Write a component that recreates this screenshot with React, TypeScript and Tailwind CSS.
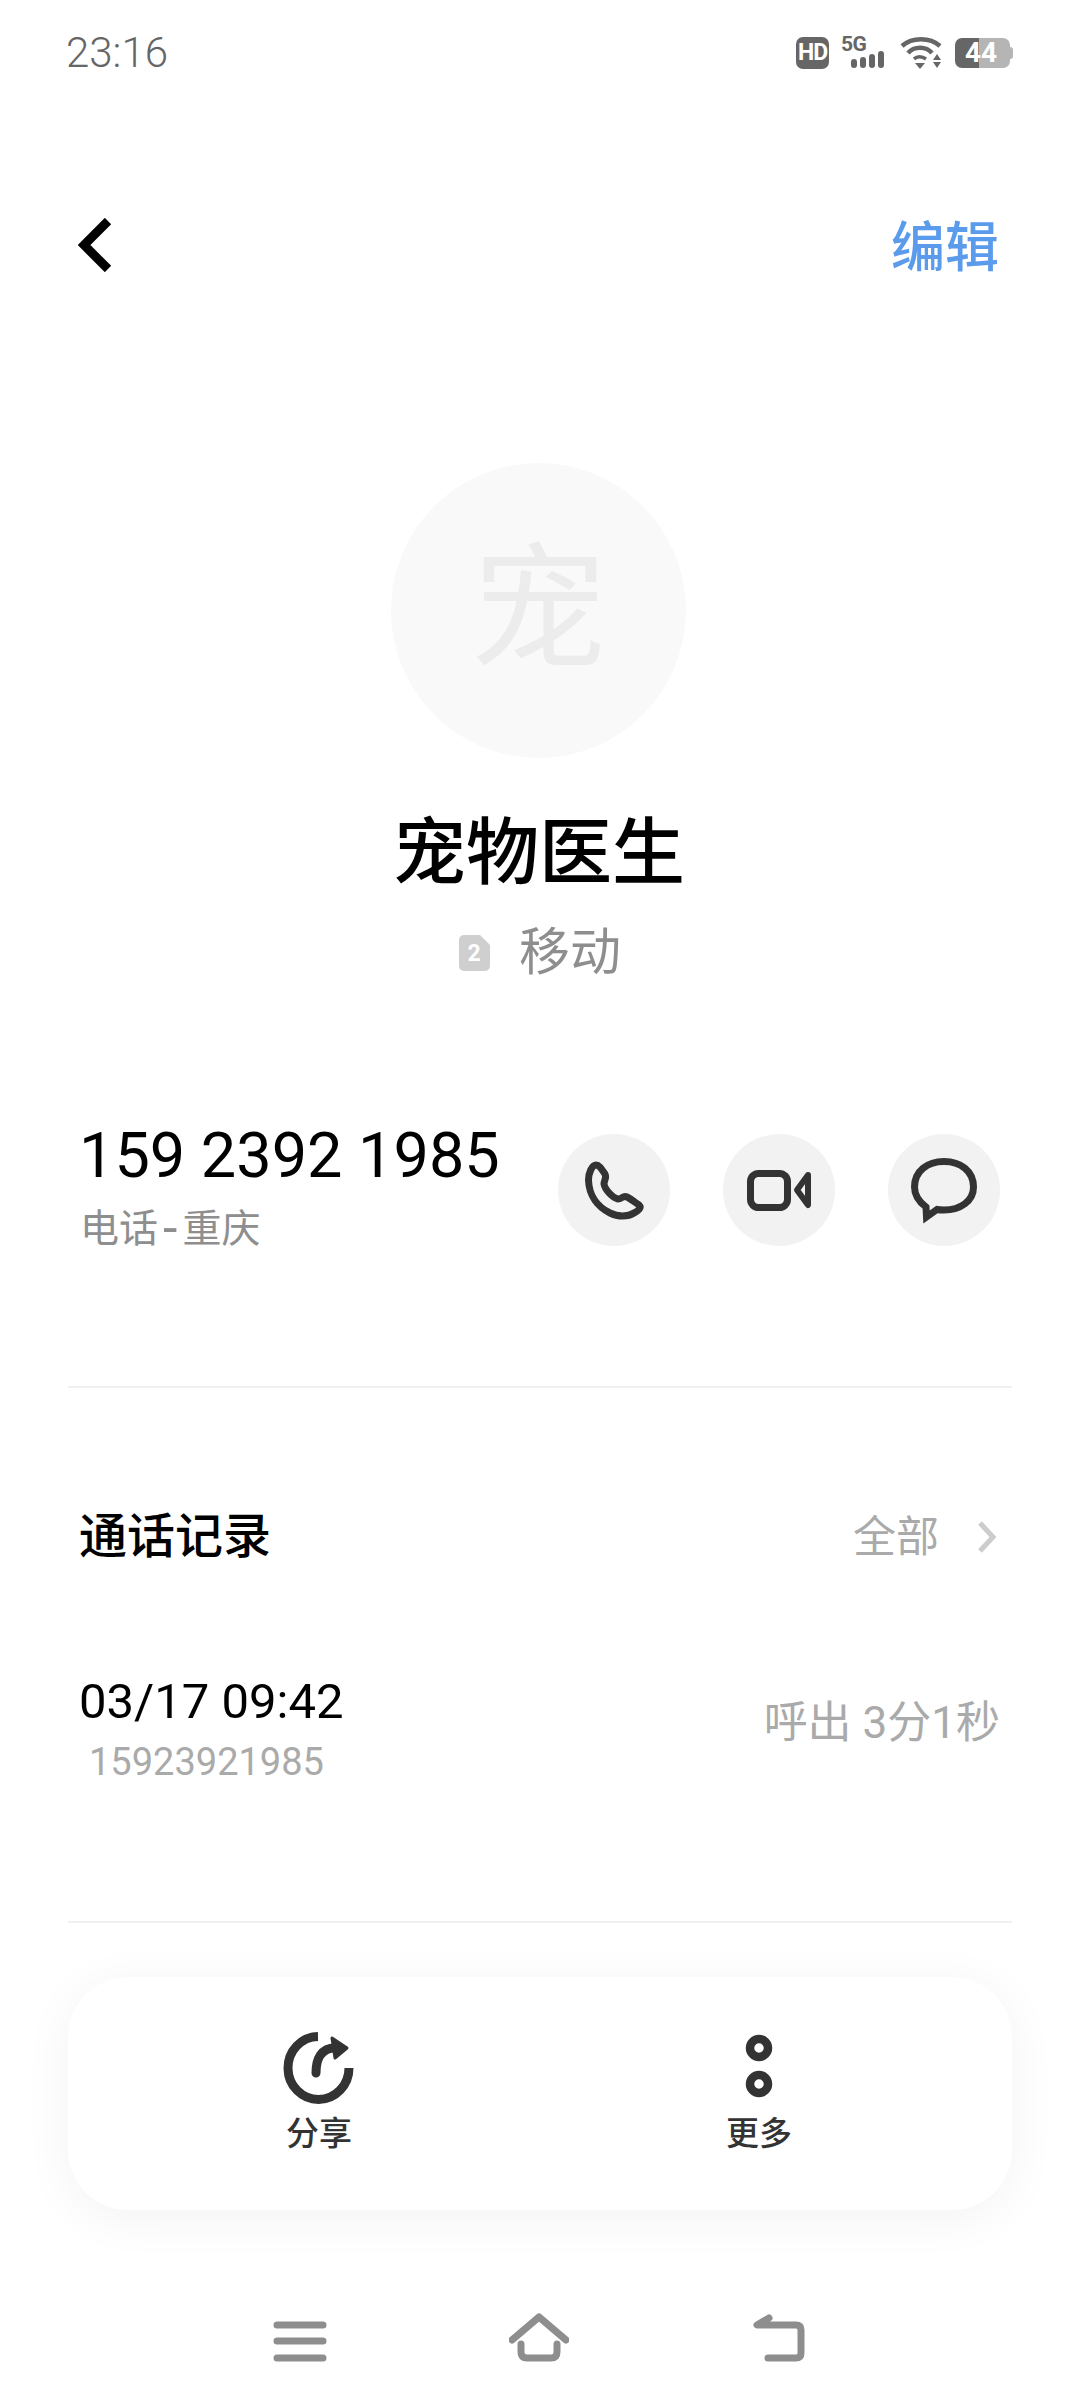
const sans = "font-['Roboto','Noto_Sans_CJK_SC',sans-serif]";

function StatusIcons() {
    return (
        <div className="flex items-center">
            <div className="flex h-[32px] w-[33px] items-center justify-center rounded-[7px] bg-[#666666] font-['Roboto'] text-[23px] font-bold tracking-[-1px] text-white">
                HD
            </div>
            <div className="relative ml-[12px] h-[32px] w-[44px]">
                <span className="absolute left-0 top-[-4px] font-['Roboto'] text-[21px] font-bold leading-[22px] tracking-[-0.5px] text-[#666666]">
                    5G
                </span>
                <svg className="absolute left-0 top-0" width="44" height="32" viewBox="0 0 44 32" fill="#666666">
                    <rect x="10" y="22" width="6" height="9" rx="3" />
                    <rect x="19" y="20" width="6" height="11" rx="3" />
                    <rect x="28" y="17" width="6" height="14" rx="3" />
                    <rect x="37" y="14" width="6" height="17" rx="3" />
                </svg>
            </div>
            <svg className="ml-[15px]" width="42" height="32" viewBox="0 0 42 32" fill="none" stroke="#666666" strokeWidth="4.5">
                <path d="M2 9 C12 0 30 0 40 9" />
                <path d="M8 16 C14 9 26 9 32 16" />
                <path d="M14 22 C17 19 22 19 26 22" strokeWidth="3.5" />
                <path d="M15 26 H25 L20 32 Z" fill="#666666" stroke="none" />
                <path d="M37 17 L41 23 H33 Z M33 25 H41 L37 31 Z" fill="#666666" stroke="none" />
            </svg>
            <div className="relative ml-[13px] h-[30px] w-[58px]">
                <div className="absolute right-0 top-[9px] h-[12px] w-[4px] rounded-r-[3px] bg-[#b5b5b5]" />
                <div className="flex h-[30px] w-[55px] overflow-hidden rounded-[7px]">
                    <div className="h-full w-[24px] bg-[#666666]" />
                    <div className="h-full flex-1 bg-[#b5b5b5]" />
                </div>
                <span className="absolute left-[10px] top-0 font-['Roboto'] text-[28px] font-bold leading-[30px] text-white">44</span>
            </div>
        </div>
    );
}

function RoundAction({ children }: { children: React.ReactNode }) {
    return (
        <div className="flex h-[112px] w-[112px] items-center justify-center rounded-full bg-[#f2f2f2]">
            {children}
        </div>
    );
}

export default function App() {
    return (
        <div className={`flex h-[2404px] w-[1080px] flex-col overflow-hidden bg-white ${sans}`}>
            {/* status bar */}
            <div className="flex h-[106px] shrink-0 items-center justify-between pl-[66px] pr-[67px]">
                <span className="text-[42px] font-light leading-[48px] text-[#666666]">23:16</span>
                <StatusIcons />
            </div>

            {/* header */}
            <div className="mt-[84px] flex h-[110px] shrink-0 items-center justify-between pl-[78px] pr-[81px]">
                <svg width="34" height="54" viewBox="0 0 34 54" fill="none">
                    <path d="M30 3 L6 27 L30 51" stroke="#000000" strokeWidth="9" strokeLinejoin="miter" />
                </svg>
                <span className="mt-[8px] text-[54px] font-medium leading-[64px] text-[#5b9bec]">编辑</span>
            </div>

            {/* contact */}
            <div className="mr-[3px] mt-[163px] flex h-[295px] w-[295px] shrink-0 items-center justify-center self-center rounded-full bg-[#f9f9f9] text-[136px] leading-none text-[#ececec]">
                宠
            </div>
            <div className="mt-[55px] h-[80px] shrink-0 pr-[2px] text-center text-[73px] font-medium leading-[80px] text-black">
                宠物医生
            </div>
            <div className="mt-[30px] flex h-[60px] shrink-0 items-center justify-center">
                <svg width="31" height="36" viewBox="0 0 31 36">
                    <path d="M5 0 H21 L31 10 V31 A5 5 0 0 1 26 36 H5 A5 5 0 0 1 0 31 V5 A5 5 0 0 1 5 0 Z" fill="#cfcfcf" />
                    <text x="15" y="26" textAnchor="middle" fontSize="23" fontWeight="700" fill="#ffffff" fontFamily="Roboto">2</text>
                </svg>
                <span className="ml-[29px] text-[51px] leading-[60px] text-[#8e8e8e]">移动</span>
            </div>

            {/* number row */}
            <div className="mt-[137px] flex shrink-0 justify-between pl-[79px] pr-[80px]">
                <div className="flex flex-col">
                    <span className="mt-[1px] h-[70px] text-[63px] leading-[70px] text-black">159 2392 1985</span>
                    <span className="ml-[1px] mt-[8px] flex h-[60px] items-center text-[39px] leading-[60px] text-[#8e8e8e]">
                        电话<span className="mx-[5px] text-[52px] leading-none">-</span>重庆
                    </span>
                </div>
                <div className="mt-[14px] flex gap-[53px]">
                    <RoundAction>
                        <svg width="70" height="70" viewBox="0 0 70 70" fill="none" stroke="#333333" strokeWidth="7" strokeLinejoin="round">
                            <path d="M17 10 C20 10 22 13 26 19 C28 23 25 25 25 29 C26 35 34 43 39 44 C43 44 44 40 48 42 C52 44 57 48 60 50 C63 53 59 56 55 58 C49 62 39 62 31 58 C19 52 10 41 9.500 25 C9.500 18 13 10 17 10 Z" />
                        </svg>
                    </RoundAction>
                    <RoundAction>
                        <svg width="70" height="70" viewBox="0 0 70 70" fill="none" stroke="#333333" strokeWidth="7" strokeLinejoin="round">
                            <rect x="6.500" y="18.500" width="37" height="34" rx="8" />
                            <path d="M64 20 L53 35 L64 50 Z" strokeWidth="6" />
                        </svg>
                    </RoundAction>
                    <RoundAction>
                        <svg width="70" height="70" viewBox="0 0 70 70" fill="none" stroke="#333333" strokeWidth="7">
                            <path d="M17 52 C9 46 5.500 40 5.500 32 C5.500 16 18.500 6.500 35 6.500 C51.500 6.500 64.500 16 64.500 32 C64.500 46 51.500 55 35 55 C32 55 30 55 28 54.500 L17.500 62 Z" />
                        </svg>
                    </RoundAction>
                </div>
            </div>

            <div className="mx-[68px] mt-[127px] h-[2px] shrink-0 bg-[#f0f0f0]" />

            {/* call log */}
            <div className="mt-[119px] flex h-[60px] shrink-0 items-center justify-between pl-[79px] pr-[83px]">
                <span className="text-[48px] font-medium leading-[60px] text-black">通话记录</span>
                <div className="flex items-center">
                    <span className="text-[43px] leading-[60px] text-[#aaaaaa]">全部</span>
                    <svg className="ml-[38px]" width="20" height="34" viewBox="0 0 20 34" fill="none">
                        <path d="M3 3 L16 17 L3 31" stroke="#cccccc" strokeWidth="5" />
                    </svg>
                </div>
            </div>

            <div className="mt-[105px] flex shrink-0 justify-between pl-[79px] pr-[80px]">
                <div className="flex flex-col">
                    <span className="h-[60px] text-[49px] leading-[60px] text-black">03/17 09:42</span>
                    <span className="ml-[10px] mt-[5px] h-[50px] text-[38px] leading-[50px] text-[#aaaaaa]">15923921985</span>
                </div>
                <span className="mt-[21px] h-[60px] text-[44px] leading-[60px] text-[#aaaaaa]">呼出 3分1秒</span>
            </div>

            <div className="mx-[68px] mt-[134px] h-[2px] shrink-0 bg-[#f0f0f0]" />

            {/* bottom actions */}
            <div className="mx-[68px] mt-[54px] flex h-[233px] shrink-0 justify-center gap-[320px] rounded-[60px] bg-white pr-[2px] pt-[54px] shadow-[0_8px_50px_rgba(0,0,0,0.05)]">
                <div className="flex w-[120px] flex-col items-center">
                    <svg width="72" height="74" viewBox="0 0 72 74" fill="none" stroke="#333333" strokeWidth="9">
                        <path d="M35 5.500 A30.500 31.500 0 1 0 66 37" />
                        <path d="M33 42 C33 28 38 17 52 17" strokeLinecap="round" />
                        <path d="M49 7 L64 17 L52 27 Z" fill="#333333" strokeWidth="3" strokeLinejoin="round" />
                    </svg>
                    <span className="mt-[7px] text-[33px] font-medium leading-[44px] text-[#333333]">分享</span>
                </div>
                <div className="flex w-[120px] flex-col items-center">
                    <svg width="28" height="74" viewBox="0 0 28 74" fill="none" stroke="#333333" strokeWidth="8.500">
                        <circle cx="14" cy="17" r="9" />
                        <circle cx="14" cy="53" r="9" />
                    </svg>
                    <span className="mt-[7px] text-[33px] font-medium leading-[44px] text-[#333333]">更多</span>
                </div>
            </div>

            {/* nav bar */}
            <div className="mt-[100px] flex h-[60px] shrink-0 justify-center gap-[181px] pr-[2px]">
                <svg width="60" height="60" viewBox="0 0 60 60" fill="none" stroke="#8e8e8e" strokeWidth="7" strokeLinecap="round">
                    <path d="M9 15 H55 M9 31 H55 M9 48 H55" />
                </svg>
                <svg width="60" height="60" viewBox="0 0 60 60" fill="none" stroke="#8e8e8e" strokeWidth="7" strokeLinecap="round" strokeLinejoin="round">
                    <path d="M3 30 L30 7 L57 30" />
                    <path d="M12 34 V42 Q12 48 18 48 H42 Q48 48 48 42 V34" />
                </svg>
                <svg width="60" height="60" viewBox="0 0 60 60" fill="none" stroke="#8e8e8e" strokeWidth="7" strokeLinecap="round" strokeLinejoin="round">
                    <path d="M19 8 L7 15 H46 Q51 15 51 20 V43 Q51 48 46 48 H18" />
                </svg>
            </div>
        </div>
    );
}
